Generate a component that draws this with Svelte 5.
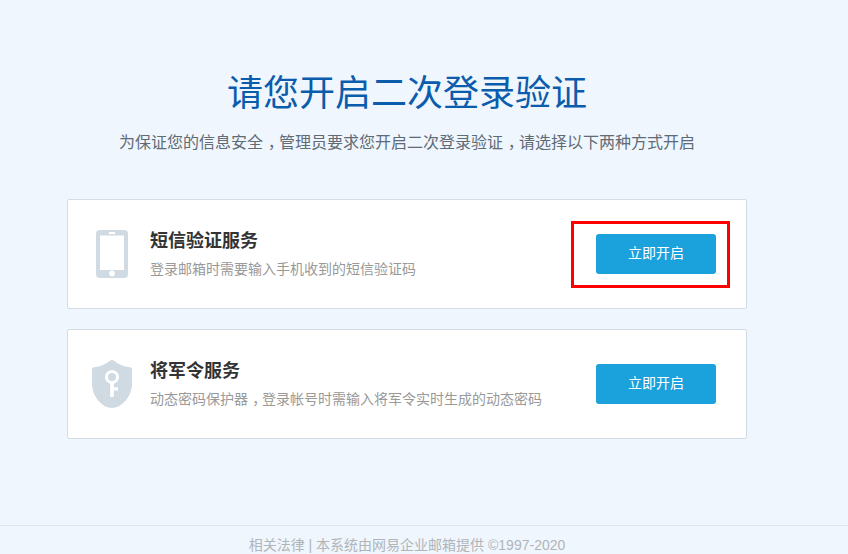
<script>
  const services = [
    { name: '短信验证服务', desc: ['登录邮箱时需要输入手机收到的短信验证码'], icon: 'phone', marked: true },
    { name: '将军令服务', desc: ['动态密码保护器', '登录帐号时需输入将军令实时生成的动态密码'], icon: 'shield', marked: false }
  ];
  const lead = ['为保证您的信息安全', '管理员要求您开启二次登录验证', '请选择以下两种方式开启'];
</script>

<div class="page">
  <main class="content">
    <h1>请您开启二次登录验证</h1>
    <p class="lead">{#each lead as part, i}{#if i > 0}<span class="comma">，</span>{/if}{part}{/each}</p>
    <div class="cards">
      {#each services as s}
        <section class="card">
          <div class="icon">
            {#if s.icon === 'phone'}
              <svg width="32" height="48" viewBox="0 0 32 48">
                <path fill-rule="evenodd" fill="#cfdae2" d="M4 0h24a4 4 0 0 1 4 4v40a4 4 0 0 1-4 4H4a4 4 0 0 1-4-4V4a4 4 0 0 1 4-4zM4 5.500V40h24V5.500zM13 2v2h6V2zM16 40.500a2.900 2.900 0 1 0 0 5.800 2.900 2.900 0 0 0 0-5.800z"/>
              </svg>
            {:else}
              <svg width="40" height="48" viewBox="0 0 40 48">
                <path fill-rule="evenodd" fill="#cfdae2" d="M20 0c1 0 2 .6 3 1.500 3.500 3 9 5 15 5.800 1.200.2 2 1 2 2.200v14.500C40 36 30 48 20 48S0 36 0 24V9.500c0-1.200.8-2 2-2.200C8 6.500 13.500 4.500 17 1.500 18 .6 19 0 20 0zM20 10a7 7 0 0 0-1.800 13.760V37h3.600v-6.500h4.200V27.300h-4.200v-3.540A7 7 0 0 0 20 10zm0 3a4 4 0 1 1 0 8 4 4 0 0 1 0-8z"/>
              </svg>
            {/if}
          </div>
          <div class="text">
            <h2>{s.name}</h2>
            <p>{#each s.desc as part, i}{#if i > 0}<span class="comma">，</span>{/if}{part}{/each}</p>
          </div>
          <div class="action">
            <button type="button">立即开启</button>
            {#if s.marked}<span class="mark"></span>{/if}
          </div>
        </section>
      {/each}
    </div>
  </main>
  <footer>相关法律 | 本系统由网易企业邮箱提供 ©1997-2020</footer>
</div>

<style>
  :global(body) {
    margin: 0;
    background: #eff6fd;
  }
  .page {
    height: 554px;
    overflow: hidden;
    display: flex;
    flex-direction: column;
    font-family: "Liberation Sans", "Noto Sans CJK SC", sans-serif;
  }
  .content {
    width: 680px;
    margin-left: 67px;
    flex: 1;
    display: flex;
    flex-direction: column;
    align-items: center;
  }
  h1 {
    margin: 70px 0 0;
    font-size: 36px;
    line-height: 48px;
    font-weight: 400;
    color: #0b5cad;
  }
  .lead {
    margin: 13px 0 0;
    font-size: 16px;
    line-height: 24px;
    color: #5f6b75;
  }
  .comma {
    display: inline-block;
    box-sizing: border-box;
    width: 1em;
    padding-left: 0.3em;
    font-feature-settings: "halt";
  }
  .cards {
    width: 100%;
    margin-top: 44px;
    display: flex;
    flex-direction: column;
    gap: 20px;
  }
  .card {
    height: 110px;
    box-sizing: border-box;
    border: 1px solid #d3dde5;
    border-radius: 2px;
    background: #fff;
    display: flex;
    align-items: center;
  }
  .icon {
    width: 82px;
    flex: none;
    display: flex;
    justify-content: center;
    padding-left: 5px;
    box-sizing: border-box;
  }
  .text {
    flex: 1;
    padding-bottom: 2px;
  }
  h2 {
    margin: 0;
    font-size: 18px;
    line-height: 26px;
    font-weight: 700;
    color: #333;
  }
  .text p {
    margin: 5px 0 0;
    font-size: 14px;
    line-height: 20px;
    color: #999;
  }
  .action {
    position: relative;
    margin-right: 30px;
    display: flex;
  }
  button {
    width: 120px;
    height: 40px;
    border: 0;
    border-radius: 3px;
    background: #1ba1db;
    color: #fff;
    font: inherit;
    font-size: 14px;
    line-height: 38px;
    padding: 0 0 2px;
  }
  .mark {
    position: absolute;
    left: -25px;
    top: -13px;
    width: 159px;
    height: 67px;
    box-sizing: border-box;
    border: 3px solid #f00;
  }
  footer {
    height: 29px;
    box-sizing: border-box;
    border-top: 1px solid #dfe7ef;
    padding: 10px 34px 0 0;
    text-align: center;
    font-size: 14px;
    line-height: 18px;
    color: #b0b5b9;
  }
</style>
